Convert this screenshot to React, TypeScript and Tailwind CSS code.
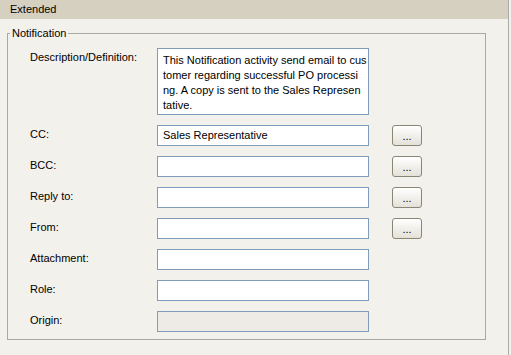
import React from 'react';

const font = { fontFamily: '"Liberation Sans", Arial, sans-serif' };

type Row = { label: string; value?: string; browse?: boolean; disabled?: boolean };

const rows: Row[] = [
  { label: 'CC:', value: 'Sales Representative', browse: true },
  { label: 'BCC:', browse: true },
  { label: 'Reply to:', browse: true },
  { label: 'From:', browse: true },
  { label: 'Attachment:' },
  { label: 'Role:' },
  { label: 'Origin:', disabled: true },
];

const descLines = [
  'This Notification activity send email to cus',
  'tomer regarding successful PO processi',
  'ng. A copy is sent to the Sales Represen',
  'tative.',
];

function BrowseButton() {
  return (
    <button
      type="button"
      className="ml-[23px] flex h-[21px] w-[30px] items-center justify-center rounded-[3px] border border-[#8a8676] bg-gradient-to-b from-white to-[#e4e1d8] pt-[2px] text-[11px] leading-none text-black"
    >
      ...
    </button>
  );
}

export default function App() {
  return (
    <div className="min-h-screen bg-[#f3f1ec] text-[11px] text-black" style={font}>
      <div className="w-[509px] min-h-[355px] border-r border-[#a9a9a9]">
        {/* section header */}
        <div className="flex h-[19px] items-center bg-[#d5d0c0] pl-[10px] leading-[13px]">
          Extended
        </div>

        <fieldset className="ml-[7px] mt-[8px] w-[479px] border border-[#a8a8a8] pb-[7px] pl-[22px] pt-[9px]">
          <legend className="ml-[-20px] px-[2px] leading-[12px]">Notification</legend>

          <div className="flex flex-col">
            {/* description */}
            <div className="flex">
              <div className="w-[127px] pt-[3px] leading-[13px]">Description/Definition:</div>
              <div className="h-[67px] w-[212px] border border-[#7f9db9] bg-white pl-[5px] pt-[4px] leading-[15px]">
                {descLines.map((l) => (
                  <div key={l} className="whitespace-nowrap">
                    {l}
                  </div>
                ))}
              </div>
            </div>

            <div className="mt-[10px] flex flex-col gap-[10px]">
              {rows.map((r) => (
                <div key={r.label} className="flex items-start">
                  <div className="w-[127px] pt-[3px] leading-[13px]">{r.label}</div>
                  <div
                    className={
                      r.disabled
                        ? 'flex h-[21px] w-[212px] items-center border border-[#7f9db9] bg-[#eeebe6] pl-[5px]'
                        : 'flex h-[21px] w-[212px] items-center border border-[#7f9db9] bg-white pl-[5px]'
                    }
                  >
                    {r.value}
                  </div>
                  {r.browse && <BrowseButton />}
                </div>
              ))}
            </div>
          </div>
        </fieldset>
      </div>
    </div>
  );
}
